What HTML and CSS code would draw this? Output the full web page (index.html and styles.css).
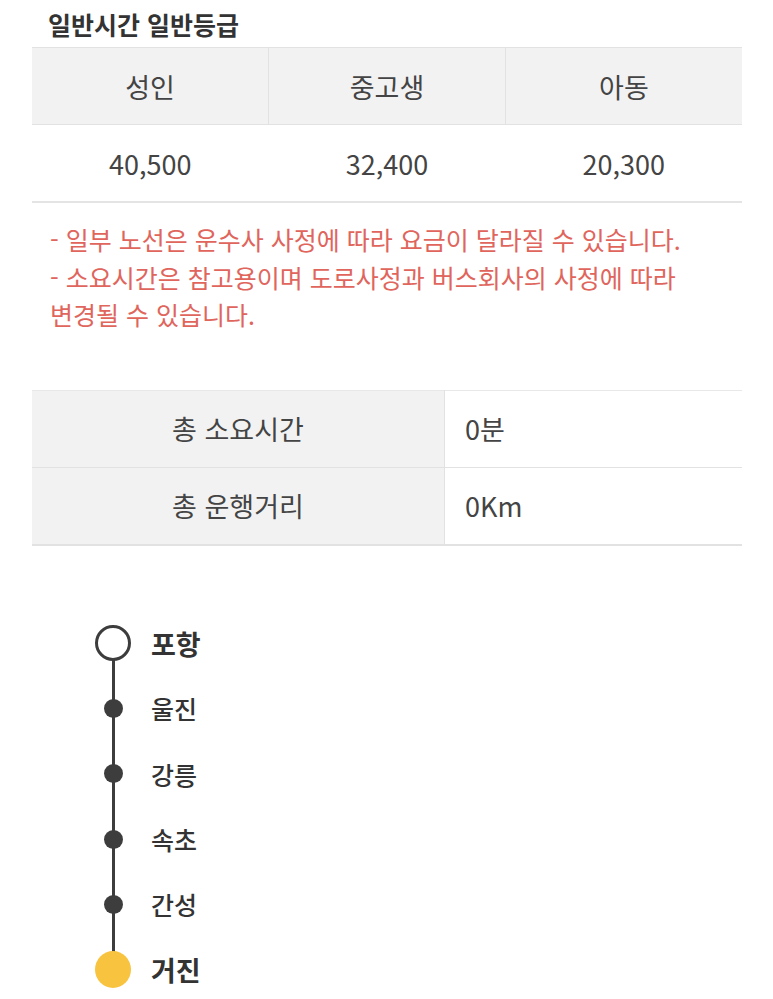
FILE: index.html
```html
<!DOCTYPE html>
<html lang="ko">
  <head>
    <meta charset="UTF-8" />
    <meta name="viewport" content="width=device-width, initial-scale=1.0" />
    <title>노선 요금 안내</title>
    <link rel="stylesheet" href="styles.css">
  </head>
  <body>
    <h2 class="grade-title">일반시간 일반등급</h2>

    <table class="fare-table">
      <thead>
        <tr>
          <th>성인</th>
          <th>중고생</th>
          <th>아동</th>
        </tr>
      </thead>
      <tbody>
        <tr>
          <td>40,500</td>
          <td>32,400</td>
          <td>20,300</td>
        </tr>
      </tbody>
    </table>

    <div class="notice">
      <p>- 일부 노선은 운수사 사정에 따라 요금이 달라질 수 있습니다.</p>
      <p>- 소요시간은 참고용이며 도로사정과 버스회사의 사정에 따라 변경될 수 있습니다.</p>
    </div>

    <table class="info-table">
      <tr>
        <th>총 소요시간</th>
        <td>0분</td>
      </tr>
      <tr>
        <th>총 운행거리</th>
        <td>0Km</td>
      </tr>
    </table>

    <ul class="route">
      <li class="stop start"><span class="dot"></span><span class="name">포항</span></li>
      <li class="stop"><span class="dot"></span><span class="name">울진</span></li>
      <li class="stop"><span class="dot"></span><span class="name">강릉</span></li>
      <li class="stop"><span class="dot"></span><span class="name">속초</span></li>
      <li class="stop"><span class="dot"></span><span class="name">간성</span></li>
      <li class="stop end"><span class="dot"></span><span class="name">거진</span></li>
    </ul>
  </body>
</html>
```

FILE: styles.css
```css
body {
  margin: 0;
  padding: 0 31px 0 32px;
  font-family: "Noto Sans CJK KR", "Noto Sans", sans-serif;
  color: #444;
  background: #fff;
}

.grade-title {
  margin: 0;
  padding: 6px 0 0 16px;
  height: 41px;
  line-height: 36px;
  font-size: 25px;
  font-weight: 700;
  color: #333;
}

.fare-table,
.info-table {
  width: 100%;
  border-collapse: collapse;
  table-layout: fixed;
  font-size: 27px;
}

.fare-table th,
.fare-table td {
  height: 76px;
  padding: 0;
  text-align: center;
  font-weight: 400;
  color: #444;
}

.fare-table th {
  background: #f2f2f2;
  border-top: 1px solid #e2e2e2;
  border-bottom: 1px solid #e2e2e2;
  border-left: 1px solid #e2e2e2;
}

.fare-table th:first-child {
  border-left: none;
}

.fare-table td {
  border-bottom: 2px solid #e4e4e4;
}

.notice {
  margin: 18px 0 56px 0;
  padding-left: 18px;
  padding-right: 20px;
  font-size: 25px;
  line-height: 37.5px;
  color: #e0655c;
  word-break: keep-all;
}

.notice p {
  margin: 0;
}

.info-table th,
.info-table td {
  height: 76px;
  padding: 0;
  font-weight: 400;
  color: #444;
  border-bottom: 1px solid #e2e2e2;
}

.info-table tr:first-child th,
.info-table tr:first-child td {
  border-top: 1px solid #e8e8e8;
}

.info-table tr:last-child th,
.info-table tr:last-child td {
  border-bottom: 2px solid #e2e2e2;
}

.info-table th {
  width: 412px;
  background: #f2f2f2;
  text-align: center;
  border-right: 1px solid #e2e2e2;
}

.info-table td {
  padding-left: 20px;
  text-align: left;
}

.route {
  position: relative;
  list-style: none;
  margin: 80px 0 0 0;
  padding: 0 0 0 63px;
}

.route::before {
  content: "";
  position: absolute;
  left: 79.5px;
  top: 32px;
  bottom: 32px;
  width: 3px;
  background: #3d3d3d;
}

.stop {
  display: flex;
  align-items: center;
  height: 65.3px;
}

.stop:first-child {
  margin-top: -15px;
}

.dot {
  position: relative;
  flex: none;
  width: 36px;
  display: flex;
  justify-content: center;
}

.dot::after {
  content: "";
  width: 19px;
  height: 19px;
  border-radius: 50%;
  background: #3d3d3d;
}

.start .dot::after {
  width: 30px;
  height: 30px;
  background: #fff;
  border: 3px solid #3d3d3d;
}

.end .dot::after {
  width: 37px;
  height: 37px;
  background: #f8c440;
}

.name {
  margin-left: 20px;
  font-size: 25px;
  font-weight: 500;
  color: #333;
}

.start .name,
.end .name {
  font-size: 27px;
  font-weight: 700;
}
```
